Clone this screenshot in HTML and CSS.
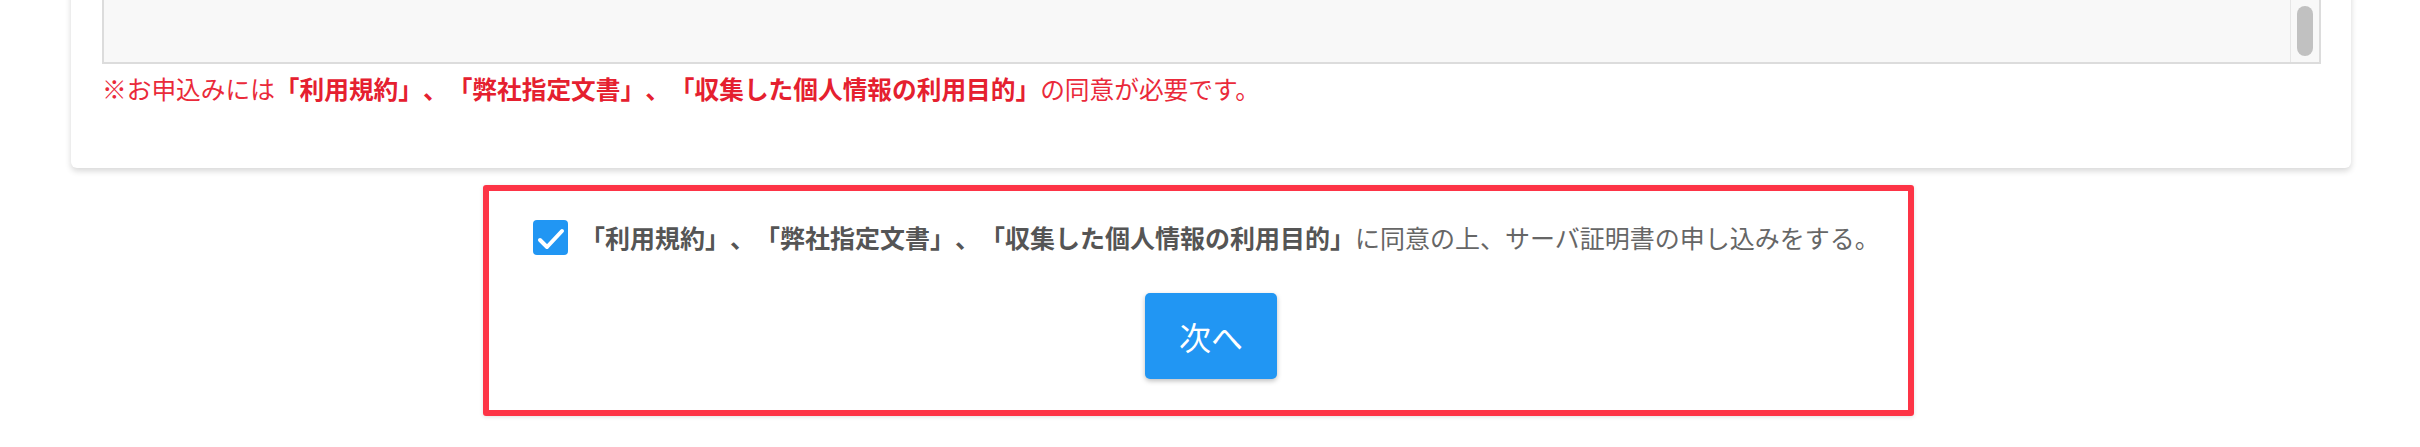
FILE: index.html
```html
<!DOCTYPE html>
<html lang="ja">
<head>
<meta charset="utf-8">
<title>お申込み</title>
<link rel="stylesheet" href="styles.css">
</head>
<body>
<div class="page">
  <section class="card">
    <div class="terms">
      <div class="terms-body"></div>
      <div class="terms-track"><div class="terms-thumb"></div></div>
    </div>
    <p class="note">※お申込みには<strong>「利用規約」、「弊社指定文書」、「収集した個人情報の利用目的」</strong>の同意が必要です。</p>
  </section>

  <div class="agree-box">
    <label class="agree-row">
      <span class="checkbox">
        <svg width="35" height="35" viewBox="0 0 35 35"><polyline points="7,20 14,27 29,11" fill="none" stroke="#fff" stroke-width="4" stroke-linecap="round" stroke-linejoin="round"/></svg>
      </span>
      <span class="agree-text"><strong>「利用規約」、「弊社指定文書」、「収集した個人情報の利用目的」</strong>に同意の上、サーバ証明書の申し込みをする。</span>
    </label>
    <div class="actions">
      <button class="next-btn" type="button">次へ</button>
    </div>
  </div>
</div>
</body>
</html>
```

FILE: styles.css
```css
html, body {
  margin: 0;
  padding: 0;
  background: #ffffff;
}

body {
  font-family: "Noto Sans CJK JP", "Noto Sans", sans-serif;
  width: 2420px;
  height: 447px;
  overflow: hidden;
  text-spacing-trim: space-all;
}

.page {
  margin-top: -40px;
}

.card {
  margin: 0 69px 0 71px;
  padding: 30px 30px 62px 31px;
  background: #ffffff;
  border-radius: 6px;
  box-shadow: 0 3px 6px rgba(0, 0, 0, 0.16);
}

.terms {
  display: flex;
  height: 74px;
  box-sizing: border-box;
  border: 2px solid #dcdcdc;
  background: #f8f8f8;
}

.terms-body {
  flex: 1;
}

.terms-track {
  width: 28px;
  border-left: 1px solid #e6e6e6;
  display: flex;
  flex-direction: column;
  justify-content: flex-end;
  align-items: center;
  padding-bottom: 6px;
}

.terms-thumb {
  width: 16px;
  height: 50px;
  background: #c1c1c1;
  border-radius: 8px;
}

.note {
  margin: 6px 0 0 0;
  font-size: 24.7px;
  line-height: 36px;
  color: #ea2a3a;
  white-space: nowrap;
  text-spacing-trim: space-all;
}

.note strong {
  font-weight: 700;
  color: #e5202f;
}

.agree-box {
  margin: 17px 0 0 483px;
  width: 1431px;
  height: 231px;
  box-sizing: border-box;
  border: 6px solid #fd3446;
  border-radius: 3px;
  padding: 28px 0 0 44px;
  box-shadow: 0 1px 4px rgba(0, 0, 0, 0.12);
}

.agree-row {
  display: flex;
  align-items: center;
  gap: 12px;
  height: 36px;
}

.checkbox {
  width: 35px;
  height: 35px;
  flex: none;
  background: #2196f3;
  border-radius: 4px;
  display: block;
}

.checkbox svg {
  display: block;
}

.agree-text {
  font-size: 25px;
  line-height: 36px;
  color: #666666;
  white-space: nowrap;
  text-spacing-trim: space-all;
}

.agree-text strong {
  font-weight: 700;
  color: #555555;
}

.actions {
  padding: 38px 0 0 612px;
}

.next-btn {
  display: flex;
  align-items: center;
  justify-content: center;
  width: 132px;
  height: 86px;
  border: none;
  border-radius: 5px;
  background: #2196f3;
  color: #ffffff;
  font-family: "Noto Sans CJK JP", "Noto Sans", sans-serif;
  font-size: 32px;
  padding: 0;
  box-shadow: 0 2px 5px rgba(0, 0, 0, 0.26);
}
```
